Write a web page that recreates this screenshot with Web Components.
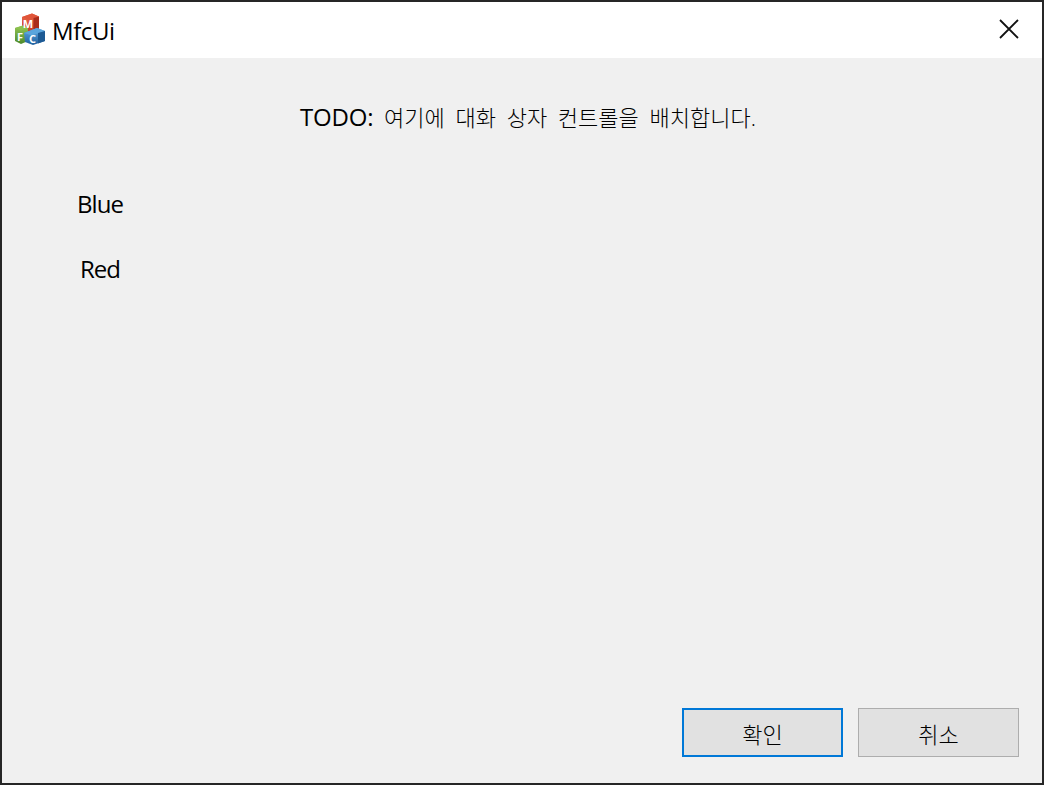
<!DOCTYPE html>
<html lang="ko">
<head>
<meta charset="utf-8">
<title>MfcUi</title>
<style>
html, body { margin: 0; padding: 0; background: #f0f0f0; }
body { font-family: "Open Sans", "Noto Sans CJK KR", sans-serif; color: #000; }
mfc-label span { font-size: 24px; font-weight: 400; letter-spacing: -0.2px; }
</style>
</head>
<body>
<mfc-dialog caption="MfcUi">
  <mfc-label slot="todo"><span>TODO:</span> 여기에 대화 상자 컨트롤을 배치합니다.</mfc-label>
  <mfc-label slot="labels" class="side">Blue</mfc-label>
  <mfc-label slot="labels" class="side">Red</mfc-label>
  <mfc-button slot="buttons" default>확인</mfc-button>
  <mfc-button slot="buttons">취소</mfc-button>
</mfc-dialog>
<script>
const dialogTemplate = document.createElement("template");
dialogTemplate.innerHTML = `
<style>
:host {
  display: flex;
  flex-direction: column;
  box-sizing: border-box;
  width: 1044px;
  height: 785px;
  border: 2px solid #262626;
  background: #f0f0f0;
  overflow: hidden;
}
#titlebar {
  display: flex;
  align-items: center;
  height: 56px;
  flex: none;
  background: #fff;
  padding: 0 23px 0 12px;
}
#titlebar svg.app { width: 32px; height: 32px; flex: none; margin: 0 7px 3px 0; }
#caption { flex: 1; font: 24px "Open Sans", sans-serif; letter-spacing: -0.4px; margin-left: -1px; }
#titlebar svg.close { width: 20px; height: 20px; flex: none; margin-top: -2px; }
#body {
  flex: 1;
  display: flex;
  flex-direction: column;
  padding: 42px 23px 26px 0;
}
#todo { display: flex; justify-content: center; padding-left: 35px; height: 34px; align-items: center; }
#labels {
  display: flex;
  flex-direction: column;
  gap: 31px;
  width: 196px;
  align-items: center;
  margin-top: 53px;
  flex: 1;
}
#buttons { display: flex; justify-content: flex-end; gap: 15px; }
</style>
<div id="titlebar">
  <svg class="app" viewBox="0 0 32 32">
    <defs>
      <linearGradient id="r" x1="0" y1="0" x2="0" y2="1"><stop offset="0" stop-color="#ee6a4c"/><stop offset="1" stop-color="#c23a24"/></linearGradient>
      <linearGradient id="g" x1="0" y1="0" x2="0" y2="1"><stop offset="0" stop-color="#93c653"/><stop offset="1" stop-color="#4d8a2c"/></linearGradient>
      <linearGradient id="b" x1="0" y1="0" x2="0" y2="1"><stop offset="0" stop-color="#62abe2"/><stop offset="1" stop-color="#1e5f9e"/></linearGradient>
    </defs>
    <path d="M8 4 L18 0.500 L25 3.500 L25 16 L15 20 L8 16Z" fill="url(#r)"/>
    <path d="M8 4 L18 0.500 L25 3.500 L15 7Z" fill="#e0553a"/>
    <path d="M19.500 5 L25 3.500 L25 16 L19.500 18Z" fill="#a92c1b"/>
    <path d="M1 15 L9 12.500 L14 15 L14 28 L7 31 L1 28Z" fill="url(#g)"/>
    <path d="M1 15 L9 12.500 L14 15 L7 17.500Z" fill="#8cc14e"/>
    <path d="M10 20 L23 15 L31 18 L31 28 L19 32 L11 29Z" fill="url(#b)"/>
    <path d="M10 20 L23 15 L31 18 L18 22.500Z" fill="#5aa5dd"/>
    <path d="M24 20 L31 18 L31 28 L24 30.500Z" fill="#1d5a94"/>
    <text x="14" y="15" font-size="11" font-weight="700" fill="#fff" font-family="Open Sans" text-anchor="middle">M</text>
    <text x="6" y="28" font-size="11" font-weight="700" fill="#fff" font-family="Open Sans" text-anchor="middle">F</text>
    <text x="18.500" y="30" font-size="11" font-weight="700" fill="#fff" font-family="Open Sans" text-anchor="middle">C</text>
  </svg>
  <div id="caption"></div>
  <svg class="close" viewBox="0 0 20 20"><path d="M1 1 L19 19 M19 1 L1 19" stroke="#111" stroke-width="1.800" fill="none"/></svg>
</div>
<div id="body">
  <div id="todo"><slot name="todo"></slot></div>
  <div id="labels"><slot name="labels"></slot></div>
  <div id="buttons"><slot name="buttons"></slot></div>
</div>`;

class MfcDialog extends HTMLElement {
  constructor() {
    super();
    this.attachShadow({ mode: "open" });
    this.shadowRoot.appendChild(dialogTemplate.content.cloneNode(true));
    this.shadowRoot.getElementById("caption").textContent = this.getAttribute("caption");
  }
}
customElements.define("mfc-dialog", MfcDialog);

const labelTemplate = document.createElement("template");
labelTemplate.innerHTML = `
<style>
:host {
  display: block;
  font: 300 22px/34px "Open Sans", "Noto Sans CJK KR", sans-serif;
  word-spacing: 5px;
  color: #000;
  white-space: nowrap;
}
:host(.side) { font-size: 24px; font-weight: 400; letter-spacing: -1px; word-spacing: 0; }
</style>
<slot></slot>`;

class MfcLabel extends HTMLElement {
  constructor() {
    super();
    this.attachShadow({ mode: "open" });
    this.shadowRoot.appendChild(labelTemplate.content.cloneNode(true));
  }
}
customElements.define("mfc-label", MfcLabel);

const buttonTemplate = document.createElement("template");
buttonTemplate.innerHTML = `
<style>
:host {
  display: flex;
  align-items: center;
  justify-content: center;
  box-sizing: border-box;
  width: 161px;
  height: 49px;
  background: #e1e1e1;
  border: 1px solid #adadad;
  font: 300 22px "Noto Sans CJK KR", sans-serif;
  color: #000;
}
:host([default]) { border: 2px solid #0078d7; }
</style>
<slot></slot>`;

class MfcButton extends HTMLElement {
  constructor() {
    super();
    this.attachShadow({ mode: "open" });
    this.shadowRoot.appendChild(buttonTemplate.content.cloneNode(true));
  }
}
customElements.define("mfc-button", MfcButton);
</script>
</body>
</html>
